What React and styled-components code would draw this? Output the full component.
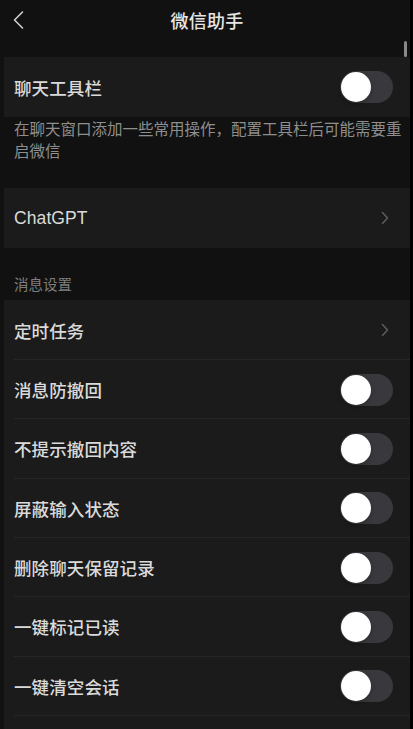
import React from 'react';
import styled, { createGlobalStyle } from 'styled-components';

const GlobalStyle = createGlobalStyle`
  html, body {
    margin: 0;
    padding: 0;
    background: #000;
  }
  body {
    font-family: "Liberation Sans", "Noto Sans CJK SC", sans-serif;
    -webkit-font-smoothing: antialiased;
  }
`;

const Screen = styled.div`
  position: relative;
  width: 410px;
  height: 729px;
  overflow: hidden;
  background: #111111;
  display: flex;
  flex-direction: column;
`;

const NavBar = styled.div`
  height: 40px;
  display: flex;
  align-items: center;
  justify-content: center;
  position: relative;
  flex-shrink: 0;
`;

const BackButton = styled.div`
  position: absolute;
  left: 12px;
  top: 10px;
  width: 14px;
  height: 20px;
  display: flex;
`;

const NavTitle = styled.div`
  color: #e6e6e6;
  font-size: 18px;
  font-weight: 500;
  margin-left: 4px;
  letter-spacing: 0.2px;
`;

const ScrollThumb = styled.div`
  position: absolute;
  left: 404px;
  top: 41px;
  width: 3px;
  height: 16px;
  border-radius: 2px;
  background: #8a8a8a;
`;

const Body = styled.div`
  margin-left: 4px;
  display: flex;
  flex-direction: column;
`;

const Gap = styled.div`
  height: ${({ h }) => h}px;
`;

const Cell = styled.div`
  box-sizing: border-box;
  height: ${({ h }) => h || 60}px;
  background: #1b1b1b;
  display: flex;
  align-items: center;
  justify-content: space-between;
  padding: 0 17px 0 10px;
  position: relative;
  ${({ divider }) =>
    divider &&
    `
    &::after {
      content: '';
      position: absolute;
      left: 10px;
      right: 0;
      bottom: 0;
      height: 1px;
      background: #262626;
    }
  `}
`;

const CellTitle = styled.span`
  color: #dadada;
  font-size: 17.5px;
  font-weight: 500;
  letter-spacing: 0.1px;
`;

const Description = styled.div`
  color: #8e8e8e;
  font-size: 15.5px;
  line-height: 22px;
  padding: 2px 4px 25px 10px;
`;

const SectionHeader = styled.div`
  box-sizing: border-box;
  height: 52px;
  display: flex;
  align-items: flex-end;
  padding: 0 0 5px 10px;
  color: #7e7e7e;
  font-size: 14.5px;
  line-height: 20px;
`;

const Track = styled.div`
  width: 53px;
  height: 32px;
  border-radius: 16px;
  background: #39393d;
  position: relative;
  flex-shrink: 0;
`;

const Knob = styled.div`
  position: absolute;
  left: 1px;
  top: 1px;
  width: 30px;
  height: 30px;
  border-radius: 50%;
  background: #ffffff;
  box-shadow: 0 2px 4px rgba(0, 0, 0, 0.25);
`;

const Toggle = () => (
  <Track>
    <Knob />
  </Track>
);

const Chevron = () => (
  <svg width="8" height="14" viewBox="0 0 8 14" style={{ marginRight: 4 }}>
    <path d="M1.5 1.5 L6.5 7 L1.5 12.5" fill="none" stroke="#5c5c5c" strokeWidth="1.5" strokeLinecap="round" strokeLinejoin="round" />
  </svg>
);

const messageRows = [
  { title: '消息防撤回' },
  { title: '不提示撤回内容' },
  { title: '屏蔽输入状态' },
  { title: '删除聊天保留记录' },
  { title: '一键标记已读' },
  { title: '一键清空会话' },
];

const App = () => (
  <>
    <GlobalStyle />
    <Screen>
      <NavBar>
        <BackButton>
          <svg width="14" height="20" viewBox="0 0 14 20">
            <path d="M10.5 2 L2.5 10 L10.5 18" fill="none" stroke="#cfcfcf" strokeWidth="1.6" strokeLinecap="round" strokeLinejoin="round" />
          </svg>
        </BackButton>
        <NavTitle>微信助手</NavTitle>
      </NavBar>
      <ScrollThumb />
      <Body>
        <Gap h={17} />
        <Cell>
          <CellTitle>聊天工具栏</CellTitle>
          <Toggle />
        </Cell>
        <Description>在聊天窗口添加一些常用操作，配置工具栏后可能需要重启微信</Description>
        <Cell>
          <CellTitle>ChatGPT</CellTitle>
          <Chevron />
        </Cell>
        <SectionHeader>消息设置</SectionHeader>
        <Cell divider>
          <CellTitle>定时任务</CellTitle>
          <Chevron />
        </Cell>
        {messageRows.map((row) => (
          <Cell key={row.title} h={59.33} divider>
            <CellTitle>{row.title}</CellTitle>
            <Toggle />
          </Cell>
        ))}
        <Cell h={40} />
      </Body>
    </Screen>
  </>
);

export default App;
